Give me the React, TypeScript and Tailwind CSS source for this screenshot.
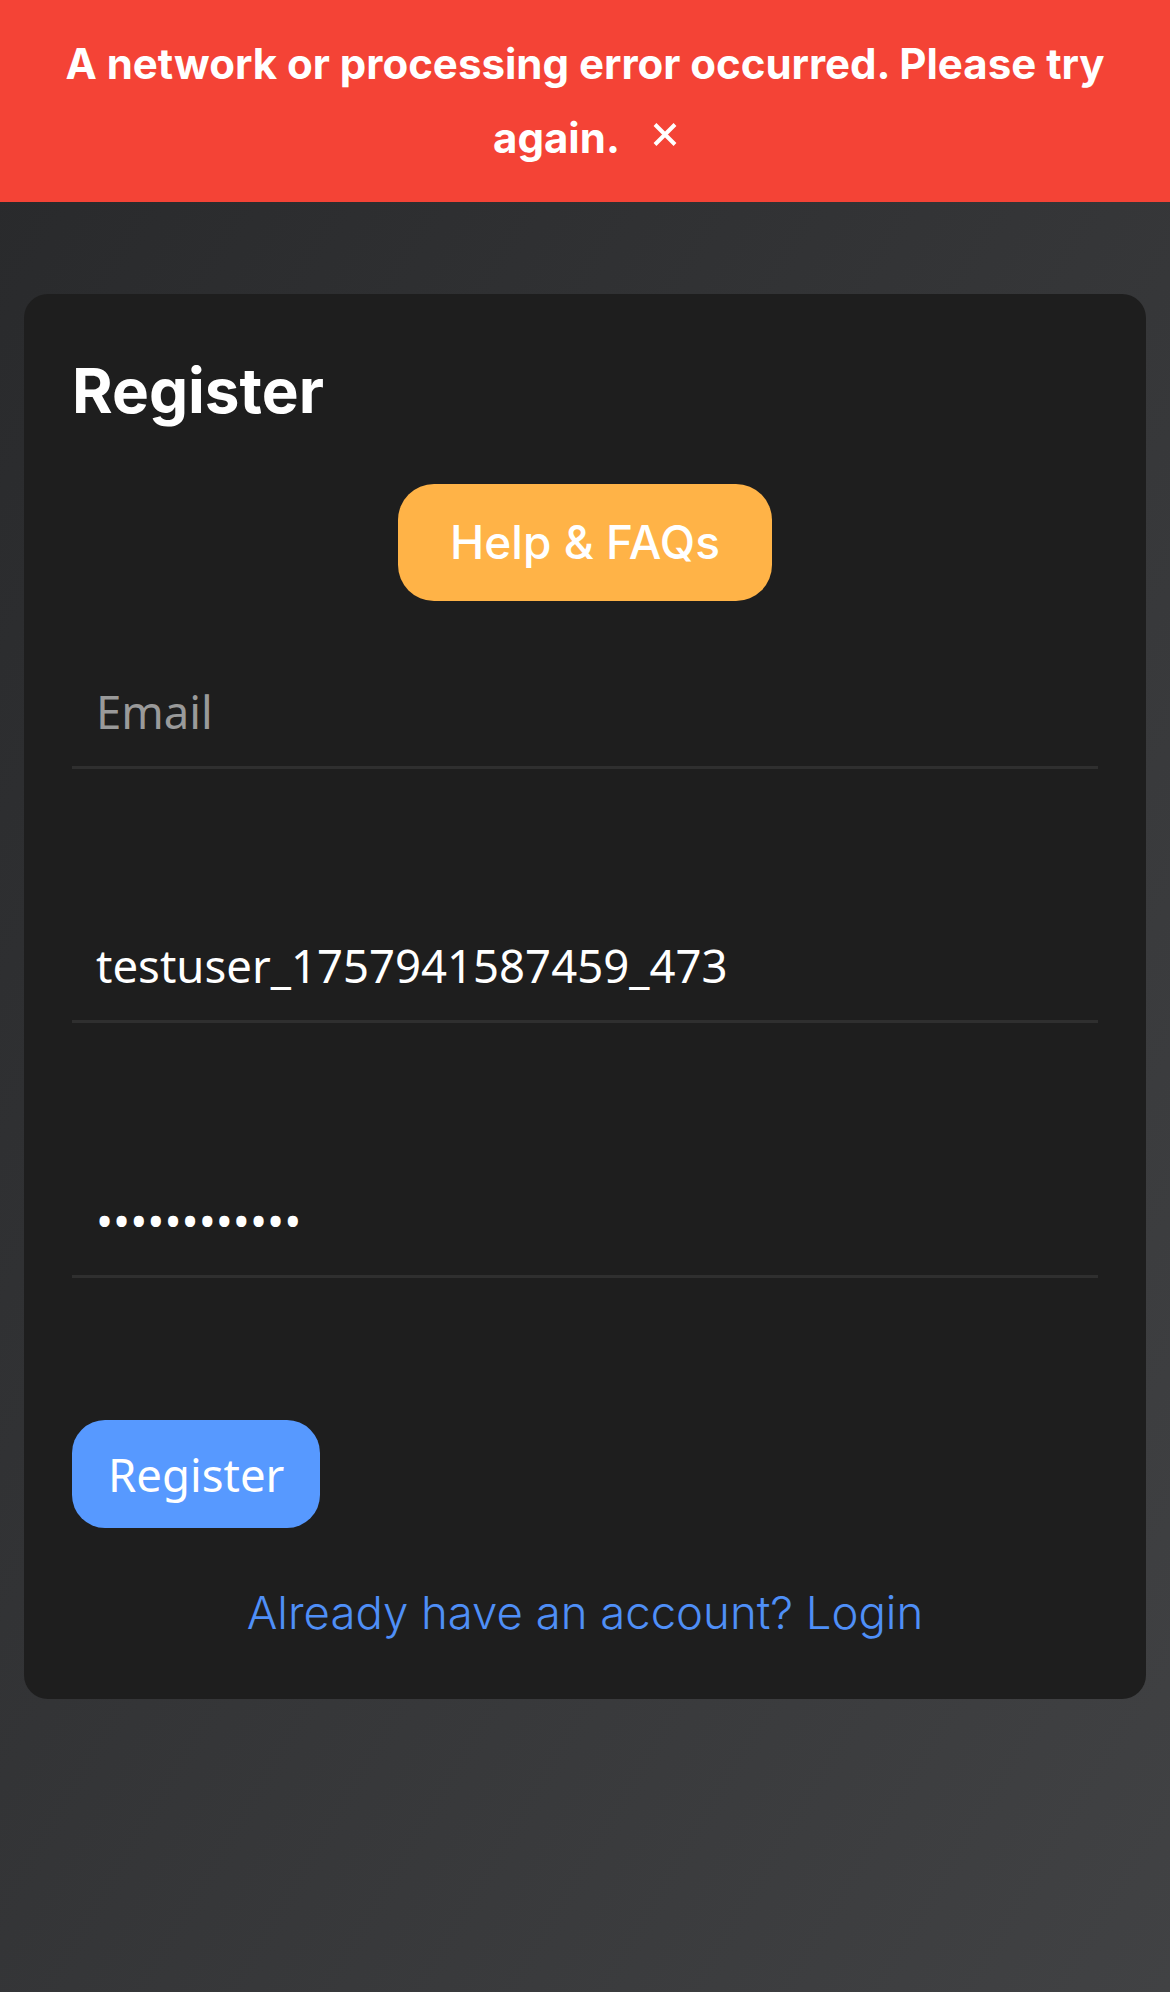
import React from "react";

export default function App() {
  return (
    <div className="min-h-screen w-full bg-linear-to-br from-[#28292b] to-[#414244] font-['Inter',sans-serif]">
      <div className="bg-[#f44336] px-[48px] pt-[27px] pb-[28px] text-center text-[42px] font-bold leading-[73.5px] text-white">
        A network or processing error occurred. Please try again.
        <button className="ml-[33px] inline-block align-[7px] text-white" aria-label="Close">
          <svg width="24" height="23" viewBox="0 0 24 23" className="block">
            <path d="M2 1.5 L22 21.5 M22 1.5 L2 21.5" stroke="white" strokeWidth="4" strokeLinecap="butt" fill="none" />
          </svg>
        </button>
      </div>

      <div className="px-[24px] pt-[92px]">
        <div className="flex flex-col rounded-[24px] bg-[#1e1e1e] px-[48px] pt-[60px] pb-[57px]">
          <h2 className="text-[62px] font-bold leading-[74px] text-white">Register</h2>

          <div className="mt-[56px] flex justify-center">
            <button className="flex h-[117px] items-center rounded-[36px] bg-[#ffb347] px-[52px] text-[46px] font-medium text-white">
              Help &amp; FAQs
            </button>
          </div>

          <input
            type="email"
            placeholder="Email"
            className="mt-[58px] h-[110px] w-full border-b-[3px] border-[#2f2f2f] bg-transparent px-[24px] pb-[3px] font-['Noto_Sans',sans-serif] text-[45.5px] text-white outline-none placeholder:text-[#9a9a9a]"
          />
          <input
            type="text"
            defaultValue="testuser_1757941587459_473"
            className="mt-[144px] h-[110px] w-full border-b-[3px] border-[#2f2f2f] bg-transparent px-[24px] pb-[3px] font-['Noto_Sans',sans-serif] text-[45.5px] text-white outline-none"
          />
          <input
            type="password"
            defaultValue="abcdefghijkl"
            className="mt-[145px] h-[110px] w-full border-b-[3px] border-[#2f2f2f] bg-transparent px-[24px] pb-[3px] font-['Noto_Sans',sans-serif] text-[45.5px] text-white outline-none"
          />

          <div className="mt-[142px] flex">
            <button className="flex h-[108px] items-center rounded-[33px] bg-[#5799ff] px-[36px] font-['Noto_Sans',sans-serif] text-[45.5px] text-white">
              Register
            </button>
          </div>

          <a className="mt-[56px] block text-center text-[45.5px] font-light leading-[58px] text-[#4f8ff7]" href="#">
            Already have an account? Login
          </a>
        </div>
      </div>
    </div>
  );
}
